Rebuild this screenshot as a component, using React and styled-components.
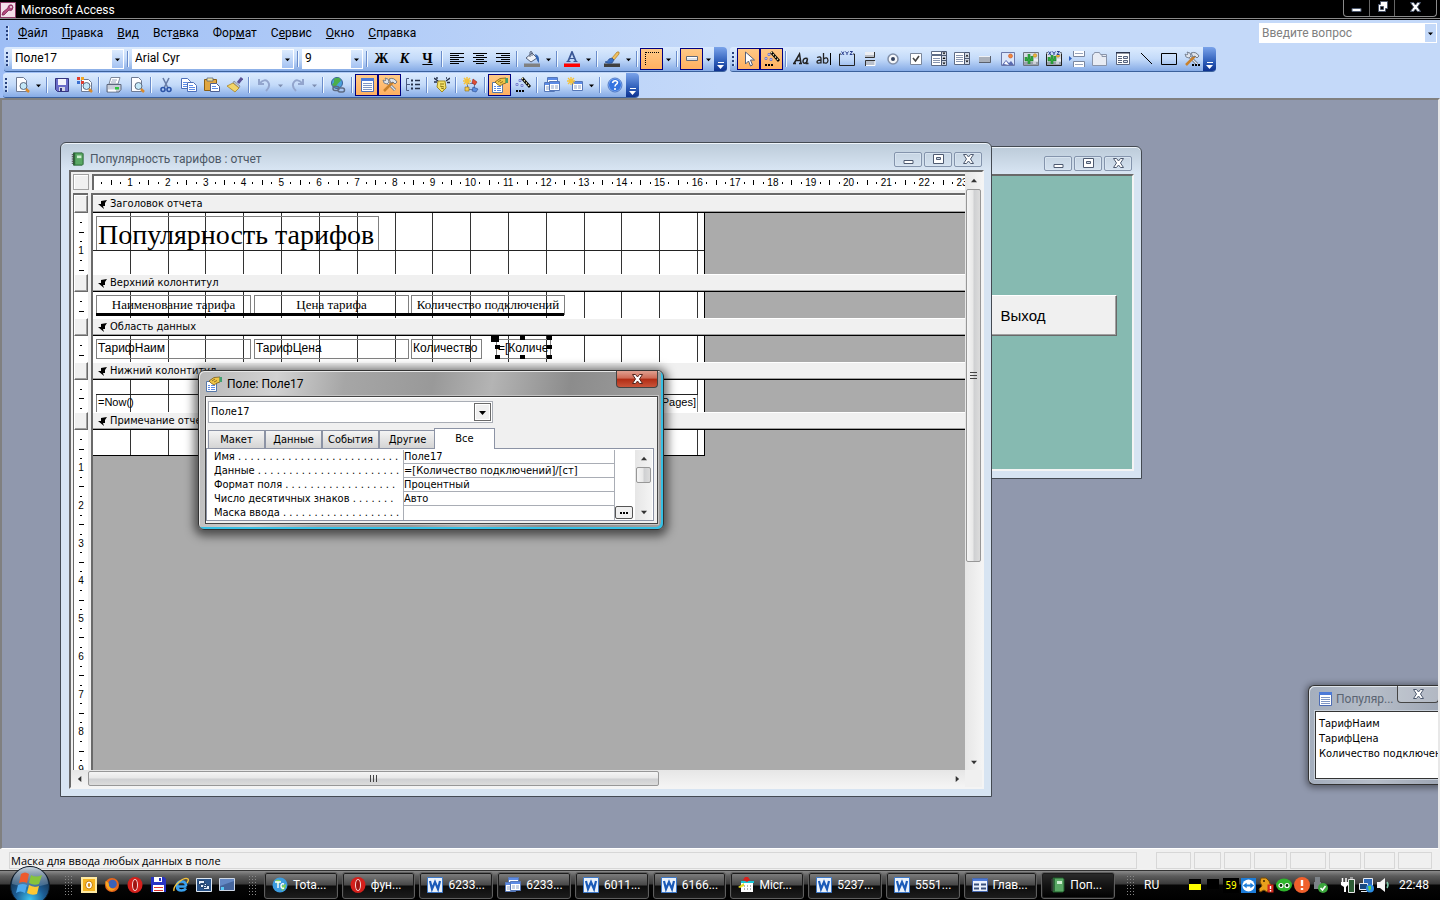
import React, { useState } from "react";
import styled, { createGlobalStyle, css } from "styled-components";

const UI_FONT = 'Roboto, "Open Sans", "Noto Sans", sans-serif';
const TAHOMA = '"DejaVu Sans Condensed", "DejaVu Sans", sans-serif';
const ARIAL = '"Liberation Sans", Arial, sans-serif';
const TIMES = '"Liberation Serif", "Times New Roman", serif';

const UNIT = 37.8; // one centimetre on the rulers

const GlobalStyle = createGlobalStyle`
    * {
        box-sizing: border-box;
    }

    body {
        margin: 0;
        font-family: ${UI_FONT};
        font-size: 12px;
        color: #000;
        overflow: hidden;
    }

    button, input, select {
        font: inherit;
        color: inherit;
        margin: 0;
        padding: 0;
        border: 0;
        border-radius: 0;
        background: none;
        outline: none;
    }

    svg {
        display: block;
        flex: none;
    }
`;

/* ---------- icons ---------- */

const page = <path d="M2.500 .5h7l3 3v11h-10z" fill="#fdfdff" stroke="#6d7a94" />;
const lens = (
    <>
        <circle cx="9.500" cy="9" r="3.500" fill="#c4e8f8" stroke="#5c6b80" />
        <path d="M12 12l3 3" stroke="#d98a2b" strokeWidth="2.500" />
    </>
);
const tools = (
    <>
        <path d="M4 4l9 9" stroke="#6a7484" strokeWidth="2.800" />
        <path d="M4 4l9 9" stroke="#dfe4ec" strokeWidth="1.200" />
        <path d="M1 3l1 3 3 1 2-2-1-3-3-1 1 2-1 1z" fill="#dfe4ec" stroke="#6a7484" strokeWidth=".8" />
        <path d="M2 14l9-9" stroke="#c9812c" strokeWidth="2.500" />
        <path d="M7 2q5-2 8 3l-2 2-2-2-2 1z" fill="#dfe4ec" stroke="#5a6474" strokeWidth=".8" />
    </>
);
const wand = (
    <>
        <path d="M7 1l8 9" stroke="#000" strokeWidth="2.800" />
        <path d="M7 1l8 9" stroke="#efe8b0" strokeWidth="1.200" strokeDasharray="1.500 1.500" />
        <path d="M1 6.500h2v2H1zM4 2.500h2v2H4zM6 7.500h2v2H6z" fill="#dfe4ff" stroke="#6570c8" strokeWidth=".8" />
        <path d="M1 13h2v2H1zM4 13h2v2H4zM7 13h2v2H7z" fill="#000" />
    </>
);
const sheet = (x, y) => (
    <g transform={`translate(${x} ${y})`}>
        <path d="M.5 .5h10v9H.5z" fill="#fff" stroke="#5577b8" />
        <path d="M1 1h9v2H1z" fill="#5c8be6" />
        <path d="M2 5h3M6 5h3M2 7h3M6 7h3" stroke="#8fa3c8" />
    </g>
);
const landscape = (
    <>
        <path d="M1.500 1.500h13v13h-13z" fill="#dbe6fa" stroke="#6b78a8" />
        <path d="M2 14l4-5 3 3 2-2 3 4z" fill="#5a6bb0" />
        <path d="M4 13l2-3 3 4z" fill="#fff" />
        <circle cx="10.500" cy="5" r="2" fill="#f08a3c" stroke="#c8502c" strokeWidth=".6" />
    </>
);
const cactus = (
    <>
        <path d="M.5 1.500h15v13H.5z" fill="#d5dbe4" stroke="#6c7480" />
        <path d="M1 11h14v3H1z" fill="#9aa2ae" />
        <path d="M3 6v3h6V5M6 3v10" stroke="#1b7a26" strokeWidth="2.600" fill="none" />
        <path d="M3 6v3h6V5M6 3v10" stroke="#38b548" strokeWidth="1.200" fill="none" />
        <circle cx="12" cy="4.500" r="1.700" fill="#f2b93c" stroke="#b07818" strokeWidth=".6" />
        <path d="M11 9h4M10 12h3" stroke="#fff" />
    </>
);
const xyz = (
    <path
        d="M2.500 .5l2.500 3.500M5 .5L2.500 4M6.500 .5L8 2.500 9.500 .5M8 2.500V4M11 .5h2.500L11 3.500h2.500"
        stroke="#2a3f8c"
        fill="none"
    />
);
const properties = (
    <>
        <path d="M.5 5.500h10v10H.5z" fill="#fff" stroke="#5577a8" />
        <path d="M2 9.500h2M5 9.500h4M2 11.500h2M5 11.500h4M2 13.500h2M5 13.500h4" stroke="#5c8be6" />
        <path d="M3 5l5-3.500L14 1v5l-3 1-3 2-3-2z" fill="#f0c648" stroke="#7a5a14" strokeWidth=".8" />
        <path d="M6 5l3-2M8 6l3-1.500" stroke="#7a5a14" strokeWidth=".8" />
        <path d="M13.500 1H16v5h-2.500z" fill="#43a070" />
    </>
);

const icons = {
    key: (
        <>
            <path d="M.5 .5h15v15H.5z" fill="#f3dfe9" stroke="#8d3a66" />
            <path d="M8 5q1-3 4-2 2 2 0 5-2 1-3 0l-5 5-2 0 1-3 5-4z" fill="#b3487e" stroke="#7c2452" strokeWidth=".8" />
            <circle cx="11" cy="5" r="1" fill="#f3dfe9" />
        </>
    ),
    alignLeft: <path d="M1 2.500h14M1 4.500h9M1 6.500h14M1 8.500h9M1 10.500h14M1 12.500h9" stroke="#000" />,
    alignCenter: <path d="M1 2.500h14M4 4.500h8M1 6.500h14M4 8.500h8M1 10.500h14M4 12.500h8" stroke="#000" />,
    alignRight: <path d="M1 2.500h14M6 4.500h9M1 6.500h14M6 8.500h9M1 10.500h14M6 12.500h9" stroke="#000" />,
    bucket: (
        <>
            <path d="M0 12.500h16v3.500H0z" fill="#808080" />
            <path d="M2 7l6-5 5 5-6 4z" fill="#eef2f8" stroke="#56627a" />
            <path d="M6 6V1q1-1 2 0v4" stroke="#56627a" fill="none" />
            <path d="M11 3q5 1 4 9-2-2-3-5z" fill="#3567b5" />
        </>
    ),
    fontColor: (
        <>
            <path d="M0 12.500h16v3.500H0z" fill="#f00" />
            <path d="M4 10.500L8 1l4 9.500" stroke="#3a5795" strokeWidth="1.800" fill="none" />
            <path d="M5.500 7.500h5M2.500 10.500h4M9.500 10.500h4" stroke="#3a5795" fill="none" />
        </>
    ),
    pen: (
        <>
            <path d="M0 12.500h16v3.500H0z" fill="#404040" />
            <path d="M8 7l5-6q3-1 2 2l-5 6z" fill="#f0c060" stroke="#a87a28" strokeWidth=".7" />
            <path d="M1 11q3 0 4-3l3-1 2 2-2 3q-4 1-7-1z" fill="#3a6fc4" stroke="#274c8c" strokeWidth=".7" />
        </>
    ),
    border: <path d="M1.500 1v14M2 1.500h13" stroke="#000" strokeDasharray="1 1" fill="none" />,
    effect: (
        <>
            <path d="M2.500 5.500h11v4h-11z" fill="#dfe3ea" stroke="#5f6878" />
            <path d="M3 6.500h10" stroke="#fff" />
        </>
    ),
    pointer: <path d="M4.500 1v12l3-3 2 5 2-1-2-5h4z" fill="#fff" stroke="#56627a" />,
    wand,
    label: (
        <>
            <path d="M1 12.500L6.500 3l1.500 9.500M3 9.500h4.500M0 12.500h3M6 12.500h3" stroke="#222" strokeWidth="1.500" fill="none" />
            <path d="M14.500 7.500q-4-1-4.500 2.500 0 3.500 3.500 1.500l1-4-1 5h2" stroke="#222" strokeWidth="1.500" fill="none" />
        </>
    ),
    textbox: (
        <>
            <path
                d="M1 6.500q4-1.500 4 1v5M5 9q-4 0-4 2t4 .5M7.500 2v10.500M7.500 8q4-3 4.500 1.500-.5 4-4.500 2"
                stroke="#222"
                strokeWidth="1.300"
                fill="none"
            />
            <path d="M14.500 2v12" stroke="#000" />
        </>
    ),
    group: (
        <>
            <path d="M2 3H.5v11.500h15V3H14" stroke="#222" fill="none" />
            {xyz}
        </>
    ),
    toggle: (
        <>
            <path d="M3 1h10v6H3z" fill="#eceef2" />
            <path d="M3 6.500h9.500V1" stroke="#333" fill="none" />
            <path d="M3 5h9" stroke="#8a909c" />
            <path d="M3 9h10v6H3z" fill="#b9c0cc" />
            <path d="M3.500 15V9.500H13" stroke="#333" fill="none" />
            <path d="M4 14.500h9V10" stroke="#fff" fill="none" />
        </>
    ),
    radio: (
        <>
            <circle cx="8" cy="8" r="5" fill="#f5f7fa" stroke="#8290a8" strokeWidth="1.500" />
            <circle cx="8" cy="8" r="2" fill="#33415e" />
        </>
    ),
    check: (
        <>
            <path d="M2.500 2.500h11v11h-11z" fill="#fff" stroke="#7a869a" />
            <path d="M5 7l2.500 3L11 5" stroke="#444" strokeWidth="1.600" fill="none" />
        </>
    ),
    combo: (
        <>
            <path d="M.5 .5h10v3H.5zM.5 4.500h10v10H.5z" fill="#fff" stroke="#5e6c86" />
            <path d="M2 7.500h7M2 9.500h7M2 11.500h7" stroke="#8794ae" />
            <path d="M10.500 .5h5v14h-5z" fill="#d3dae6" stroke="#4a5670" />
            <path d="M11 4.500h4M11 9.500h4" stroke="#4a5670" />
            <path d="M11.500 1.500h3L13 3.500zM11.500 8h3L13 6zM11.500 11.500h3L13 13.500z" fill="#000" />
        </>
    ),
    listbox: (
        <>
            <path d="M.5 1.500h10v12H.5z" fill="#fff" stroke="#5e6c86" />
            <path d="M2 4.500h7M2 6.500h7M2 8.500h7M2 10.500h7" stroke="#8794ae" />
            <path d="M10.500 1.500h5v12h-5z" fill="#d3dae6" stroke="#4a5670" />
            <path d="M11 7.500h4" stroke="#4a5670" />
            <path d="M11.500 5.500h3L13 3.500zM11.500 9.500h3L13 11.500z" fill="#000" />
        </>
    ),
    command: (
        <>
            <path d="M2 5h12v7H2z" fill="#aab0ba" />
            <path d="M2 5h12v1H2z" fill="#eef0f4" />
            <path d="M2 11.500h11.500V5" stroke="#5a606c" fill="none" />
        </>
    ),
    image: landscape,
    unbound: cactus,
    bound: (
        <>
            {cactus}
            <path d="M2 0h12v4H2z" fill="#c8dcfa" />
            {xyz}
            <path d="M.5 3v11.500h15V3" stroke="#222" fill="none" />
        </>
    ),
    pageBreak: (
        <>
            <path d="M4.500 0v5.500h11V0M4.500 16v-5.500h11V16" fill="#fff" stroke="#7a879f" />
            <path d="M6 2.500h8M6 13.500h8" stroke="#9aa6bd" />
            <path d="M0 5v5l3-2.500z" fill="#2f62c0" />
        </>
    ),
    tab: (
        <>
            <path d="M.5 14.500v-11h1l1-2h5l1 2h6v11z" fill="#e8ecf4" stroke="#8a95aa" />
            <path d="M10 3.500v2h5" stroke="#8a95aa" />
        </>
    ),
    subform: (
        <>
            <path d="M1.500 1.500h13v12h-13z" fill="#fff" stroke="#5a6680" />
            <path d="M1 1h14v1.500H1z" fill="#2a344c" />
            <path d="M3 5.500h4M3 7.500h4M3 9.500h4M3 11.500h4" stroke="#56627a" />
            <path d="M8.500 5.500h4v2h-4zM8.500 9.500h4v2h-4z" stroke="#56627a" fill="#dfe6f4" />
        </>
    ),
    line: <path d="M3 2l11 11" stroke="#000" />,
    rect: <path d="M.5 2.500h15v11H.5z" stroke="#000" fill="none" />,
    more: (
        <>
            {tools}
            <path d="M8 13h2v2H8zM11 13h2v2h-2zM14 13h2v2h-2z" fill="#000" />
        </>
    ),
    preview: (
        <>
            {page}
            {lens}
        </>
    ),
    save: (
        <>
            <path d="M1.500 1.500h13v13h-11l-2-2z" fill="#6a6cc8" stroke="#34357e" />
            <path d="M4 2h8v6H4z" fill="#f4f4fc" />
            <path d="M5 10h6v4H5z" fill="#d4d6e6" />
            <path d="M6 11h2v3H6z" fill="#34357e" />
        </>
    ),
    search: (
        <>
            <path d="M4.500 2.500h7l3 3v9h-10z" fill="#fff" stroke="#6d7a94" />
            <path d="M0 0h3v3H0z" fill="#e23c2c" />
            <path d="M4 0h3v3H4z" fill="#f2a722" />
            <path d="M0 4h3v3H0z" fill="#3a6fd0" />
            <path d="M4 4h3v3H4z" fill="#e23c2c" />
            {lens}
        </>
    ),
    print: (
        <>
            <path d="M5 .5h9L12 7H3z" fill="#fff" stroke="#7d879a" />
            <path d="M6 3h5M5 5h5" stroke="#9aa6bd" />
            <path d="M1 7.500h14v5l-2 2.500H1z" fill="#c8cdd8" stroke="#5d677c" />
            <path d="M2 12.500h8v2H2z" fill="#fff" />
            <path d="M9 10h4v2.500H9z" fill="#2ec43e" />
        </>
    ),
    cut: (
        <>
            <path d="M5 1l5 10M11 1L6 11" stroke="#6a7fa8" strokeWidth="1.600" />
            <circle cx="5" cy="12.500" r="2" fill="none" stroke="#2d55a8" strokeWidth="1.600" />
            <circle cx="11" cy="12.500" r="2" fill="none" stroke="#2d55a8" strokeWidth="1.600" />
        </>
    ),
    copy: (
        <>
            <path d="M.5 1.500h6l3 3v7h-9z" fill="#fff" stroke="#4d6fb8" />
            <path d="M2 5.500h4M2 7.500h4M2 9.500h4" stroke="#5c8be6" />
            <path d="M6.500 5.500h6l3 3v6h-9z" fill="#fff" stroke="#4d6fb8" />
            <path d="M8 8.500h4M8 10.500h6M8 12.500h6" stroke="#5c8be6" />
        </>
    ),
    paste: (
        <>
            <path d="M.5 2.500h12v11H.5z" fill="#e0a640" stroke="#8c6014" />
            <path d="M3 1h6v3H3z" fill="#f4e6a0" stroke="#5d677c" strokeWidth=".8" />
            <path d="M6.500 6.500h6l3 3v5h-9z" fill="#fff" stroke="#4d5f90" />
            <path d="M8 9.500h4M8 11.500h6" stroke="#5c8be6" />
        </>
    ),
    brush: (
        <>
            <path d="M15 1l-4 5" stroke="#5a5296" strokeWidth="3" />
            <path d="M7 4l6 5-1 2-6-5z" fill="#bcc3d0" stroke="#6a7080" strokeWidth=".6" />
            <path d="M6 6l6 5-4 4-8-6z" fill="#f2d468" stroke="#a88428" strokeWidth=".8" />
        </>
    ),
    undo: <path d="M3 2v5h5M3.500 6.500Q9 1 12 5t-2 9" stroke="#93a5cd" strokeWidth="2" fill="none" />,
    redo: <path d="M13 2v5H8M12.500 6.500Q7 1 4 5t2 9" stroke="#93a5cd" strokeWidth="2" fill="none" />,
    globe: (
        <>
            <circle cx="7" cy="6" r="5.500" fill="#4aa0dc" stroke="#3b5f94" />
            <path d="M4 1.500l5-1 2 3-3 3-3 4-3-3 2-2z" fill="#4cae4c" />
            <path
                d="M3 11.500q0-2 2-2h2q2 0 2 2t-2 2H5q-2 0-2-2zM8 13q0-2 2-2h2.500q2 0 2 2t-2 2H10q-2 0-2-2z"
                fill="none"
                stroke="#5d6b84"
                strokeWidth="1.500"
            />
        </>
    ),
    fieldList: (
        <>
            <path d="M2.500 1.500h12v13h-12z" fill="#fff" stroke="#4c6cb4" />
            <path d="M2 1h13v3H2z" fill="#4c7ad8" />
            <path d="M4 6.500h9M4 8.500h9M4 10.500h9M4 12.500h9" stroke="#7f96c4" />
        </>
    ),
    tools,
    sorting: (
        <>
            <path d="M4 1.500H1.500v12H4M2 7.500h3" stroke="#4a5a80" fill="none" />
            <path d="M6 3.500h2M6 7.500h2M6 11.500h2" stroke="#26314a" strokeWidth="2" />
            <path d="M10 3.500h5M10 7.500h5M10 11.500h5" stroke="#26314a" strokeWidth="1.500" />
        </>
    ),
    format: (
        <>
            <path d="M4 4l7 0 1 7-4 4-5-5z" fill="#f4e26a" stroke="#a08a20" />
            <path d="M6 7l4 0M6 9l4 1M7 11l3 1" stroke="#8a7410" />
            <path d="M0 1l4 3M0 5h3M12 4l4-3M13 5.500h3M12 1h1M3 0v2" stroke="#26314a" strokeWidth="1.400" />
        </>
    ),
    build: (
        <>
            <path d="M4.500 6.500h7v6h-7z" fill="none" stroke="#6279a8" />
            <path d="M4 0v8M0 4h8M1 1l6 6M7 1L1 7" stroke="#f5c23c" strokeWidth="1.500" />
            <path d="M10 2l4 3-2 3-3-2z" fill="#e24b34" stroke="#8c2c1c" strokeWidth=".6" />
            <path d="M2 10h4v4H2z" fill="#f2c850" stroke="#8c6c18" strokeWidth=".6" />
            <path d="M10 10l5 2-2 3-4-1z" fill="#5a8ce0" stroke="#2c4c8c" strokeWidth=".6" />
        </>
    ),
    properties,
    windows: (
        <>
            {sheet(3, 0)}
            {sheet(0, 5)}
            {sheet(5, 4)}
        </>
    ),
    newObject: (
        <>
            {sheet(5, 4)}
            <path d="M4 0v8M0 4h8M1 1l6 6M7 1L1 7" stroke="#f5c23c" strokeWidth="1.300" />
        </>
    ),
    help: (
        <>
            <circle cx="8" cy="8" r="6.500" fill="#3574e0" stroke="#9cc0f6" />
            <circle cx="8" cy="8" r="7" fill="none" stroke="#2c5ab4" strokeWidth=".7" />
            <path d="M5.500 6q.5-2.500 3-2.300 3 .8 1.500 3Q8 8 8 9.500M8 11v2" stroke="#fff" strokeWidth="1.600" fill="none" />
        </>
    ),
    report: (
        <>
            <path d="M4 1h10l1 1v12l-1 1H4z" fill="#5aa865" stroke="#1f5c2a" />
            <path d="M4 1h2v14H4z" fill="#2a6d36" />
            <path d="M8 4h5v3H8z" fill="#cdeed0" />
            <path d="M2 3h3M2 5h3M2 7h3M2 9h3M2 11h3M2 13h3" stroke="#444" />
        </>
    ),
    outlook: (
        <>
            <path d="M1 1h14v14H1z" fill="#f6b420" stroke="#fde9a4" strokeWidth="2" />
            <ellipse cx="8" cy="8" rx="3.500" ry="4" fill="#fff" stroke="#c47e08" />
            <ellipse cx="8" cy="8" rx="1.300" ry="2" fill="#d68d10" />
        </>
    ),
    firefox: (
        <>
            <circle cx="8" cy="8" r="7" fill="#e8661a" />
            <circle cx="8.500" cy="7" r="4.300" fill="#3a62b8" />
            <path d="M1.500 4q4 1 3.500 5 2 4 7 2-3 4-7 2-4-4-3.500-9z" fill="#f5a623" />
        </>
    ),
    opera: (
        <>
            <ellipse cx="8" cy="8" rx="7.500" ry="8" fill="#d4201c" />
            <ellipse cx="8" cy="8" rx="3" ry="6" fill="#f6dcdc" />
            <ellipse cx="8" cy="8" rx="2" ry="5" fill="#a01412" />
        </>
    ),
    floppy: (
        <>
            <path d="M1 0h13l2 2v13H1z" fill="#2733c4" />
            <path d="M4 0h8v5H4zM3 8h11v7H3z" fill="#fff" />
            <path d="M9 1h2v3H9z" fill="#2733c4" />
            <path d="M4 10.500h9M4 13.500h9" stroke="#e0322c" />
        </>
    ),
    ie: (
        <>
            <path
                d="M13.500 9.500H4M13 9q0-4.500-4.500-4.500T4 9q0 4.500 4.500 4.500 3 0 4.500-2"
                stroke="#3aa2ee"
                strokeWidth="2.700"
                fill="none"
            />
            <path d="M1 14Q0 10 6 5t9-3q1 1-1 4" stroke="#f5c43c" strokeWidth="1.400" fill="none" />
        </>
    ),
    switcher: (
        <>
            <path d="M.5 1.500h15v13H.5z" fill="#2a558c" stroke="#dfe8f2" />
            <path d="M2.500 3.500h6v4h-6zM4.500 6.500h6v4h-6zM7.500 8.500h6v4h-6z" fill="#e6eef8" stroke="#244672" />
        </>
    ),
    desktop: (
        <>
            <path d="M.5 1.500h15v12H.5z" fill="#6488c4" stroke="#cdd6e4" />
            <path d="M1 9l14-5v9H1z" fill="#45659c" />
            <path d="M2 10h3v3H2z" fill="#56c8f4" />
        </>
    ),
    totalcmd: (
        <>
            <circle cx="8" cy="8" r="7.500" fill="#3c9ce0" />
            <path d="M3 4q3-3 6 0l-3 4zM9 9l5-2q0 5-4 7z" fill="#7ed05c" />
            <path d="M3 5h6M6 5v6M12 7q-3-1-3 2t3 2" stroke="#fff" strokeWidth="1.400" fill="none" />
        </>
    ),
    word: (
        <>
            <path d="M.5 .5h15v15H.5z" fill="#eaf2fc" stroke="#3c78c8" />
            <path d="M3 4l2 8L8 5l3 7 2-8" stroke="#1a5ab8" strokeWidth="2.200" fill="none" />
        </>
    ),
    msaccess: (
        <>
            <path d="M3 5h12v10H3z" fill="#fff" />
            <path d="M3 4h13v2H3z" fill="#18c8d8" />
            <path d="M5 3l2-3h3l2 3-3 2z" fill="#d8201c" />
            <path d="M0 10l6-4v3l-4 2z" fill="#e8e020" />
            <path d="M6 9h1M9 9h1M12 9h1M6 12h1M9 12h1M12 12h1" stroke="#666" />
        </>
    ),
    form: (
        <>
            <path d="M.5 1.500h15v13H.5z" fill="#e9f0fc" stroke="#4668b0" />
            <path d="M1 2h14v2H1z" fill="#4c7ad8" />
            <path d="M2 7.500h5M9 7.500h5M2 11.500h5M9 11.500h5" stroke="#39507c" strokeWidth="2" />
        </>
    ),
    cpuLoad: (
        <>
            <path d="M2 2h12v6H2z" fill="#000" />
            <path d="M2 7h12v6H2z" fill="#ff0" />
        </>
    ),
    diskLoad: <path d="M2 2h12v10H2z" fill="#000" />,
    teamviewer: (
        <>
            <path d="M0 0h16v16H0z" fill="#1c7cd8" />
            <circle cx="8" cy="8" r="6.500" fill="#fff" />
            <path d="M2 8l4-3v2h4V5l4 3-4 3V9H6v2z" fill="#1c7cd8" />
        </>
    ),
    keys: (
        <>
            <path d="M3 1h5l3 3 2 5-4 6-3-2-4 2-1-3 3-3-2-4z" fill="#e8a01c" stroke="#7a4c04" />
            <circle cx="6" cy="4" r="1" fill="#3c2400" />
            <path d="M9.500 7.500h6v8h-6z" fill="#d4281c" />
            <path d="M12.500 9v3M12.500 13v1.500" stroke="#fff" strokeWidth="1.400" />
        </>
    ),
    frog: (
        <>
            <ellipse cx="8" cy="8" rx="8" ry="6.500" fill="#2fb52c" />
            <circle cx="5" cy="8.500" r="2" fill="#062d05" stroke="#fff" strokeWidth="1.200" />
            <circle cx="11" cy="8.500" r="2" fill="#062d05" stroke="#fff" strokeWidth="1.200" />
        </>
    ),
    alert: (
        <>
            <circle cx="8" cy="8" r="8" fill="#f0602c" />
            <path d="M8 3v6M8 11v2" stroke="#fff" strokeWidth="2.400" />
        </>
    ),
    usb: (
        <>
            <path d="M3 0h5v5H3zM2 5h7v7H2z" fill="#7c8288" />
            <circle cx="11" cy="11" r="5" fill="#3ba53c" />
            <path d="M8.500 11l2 2 3-4" stroke="#fff" strokeWidth="1.600" fill="none" />
        </>
    ),
    power: (
        <>
            <path d="M8.500 2.500h6v13h-6zM10 1h3" fill="#2c5c34" stroke="#e8e8e8" />
            <path d="M1 5h7v3l-2 2v5H4v-5L1 8z" fill="#fff" />
            <path d="M2.500 1v4M6 1v4" stroke="#fff" strokeWidth="1.500" />
        </>
    ),
    network: (
        <>
            <path d="M5.500 1.500h9v8h-9z" fill="#2c68b8" stroke="#e6ecf4" />
            <path d="M1.500 6.500h8v6h-8zM3 14.500h6" fill="#184880" stroke="#e6ecf4" />
            <circle cx="12" cy="11.500" r="4" fill="#2c8ce4" />
            <path d="M10 9h3v3l-2 2z" fill="#5cd050" />
        </>
    ),
    volume: (
        <>
            <path d="M1 5h3l5-4v14l-5-4H1z" fill="#f4f4f4" />
            <path d="M11 5q2 3 0 6" stroke="#7cc8a8" strokeWidth="1.500" fill="none" />
        </>
    ),
};

const Icon = ({ name, size = 16 }) => (
    <svg width={size} height={size} viewBox="0 0 16 16" fill="none" aria-hidden="true">
        {icons[name]}
    </svg>
);

const arrows = {
    down: "M0 2h7L3.500 6z",
    up: "M0 5h7L3.500 1z",
    left: "M5 0v7L1 3.500z",
    right: "M2 0v7l4-3.500z",
};

const Arrow = ({ dir = "down", color = "#000", size = 5 }) => (
    <svg width={size} height={size} viewBox="0 0 7 7" aria-hidden="true">
        <path d={arrows[dir]} fill={color} />
    </svg>
);

const glyphs = {
    min: <path d="M3 7.500h9v3H3z" />,
    max: <path d="M2.500 1.500h10v9h-10zM5.500 4.500h4v2h-4z" fillRule="evenodd" />,
    restore: <path d="M5.500 .5h7v7h-2v3h-7v-7h2zM5.500 5.500h3v3h-3z" fillRule="evenodd" />,
    close: <path d="M2.500 1.500h3l2 2.500 2-2.500h3L9.500 6l3 4.500h-3l-2-2.500-2 2.500h-3l3-4.500z" />,
};

const Glyph = ({ kind, stroke = "#4e5a70" }) => (
    <svg width="15" height="12" viewBox="0 0 15 12" fill="#fff" stroke={stroke} aria-hidden="true">
        {glyphs[kind]}
    </svg>
);

/* ---------- application frame ---------- */

const Shell = styled.div`
    height: 100vh;
    display: flex;
    flex-direction: column;
    overflow: hidden;
`;

const TitleBar = styled.header`
    flex: none;
    height: 20px;
    display: flex;
    align-items: flex-start;
    justify-content: space-between;
    background: #000;
    border-bottom: 1px solid #000;
    box-shadow: inset 0 -1px #8a8a8a;
    color: #fff;
`;

const AppTitle = styled.div`
    display: flex;
    align-items: center;
    gap: 5px;
    height: 18px;
    padding-top: 1px;
`;

const FrameButtons = styled.div`
    display: flex;
    height: 17px;
    margin-right: 3px;
    border: 1px solid #8a8a8a;
    border-top: 0;
    border-radius: 0 0 4px 4px;
`;

const FrameButton = styled.button`
    width: ${({ $wide }) => ($wide ? 42 : 25)}px;
    display: flex;
    justify-content: center;
    padding-top: 1px;
    border-left: ${({ $first }) => ($first ? 0 : "1px solid #666")};
`;

const CommandArea = styled.div`
    flex: none;
    display: flex;
    flex-direction: column;
    gap: 1px;
    background: linear-gradient(90deg, #9ebef5, #c4d9f9 50%);
`;

const MenuRow = styled.nav`
    height: 26px;
    display: flex;
    align-items: center;
    padding: 0 3px 0 4px;
`;

const MenuItem = styled.button`
    padding: 0 7px;
    line-height: 20px;
`;

const Spacer = styled.div`
    flex: 1;
`;

const Grip = styled.span`
    flex: none;
    align-self: center;
    width: 3px;
    height: 14px;
    margin: 0 2px;
    background: repeating-linear-gradient(#27417c 0 2px, transparent 2px 4px);
    border-right: 1px solid #d8e6fb;
`;

const Question = styled.div`
    display: flex;
    align-items: center;
    width: 178px;
    height: 20px;
    padding: 1px;
    background: #fff;
    color: #808080;

    input {
        flex: 1;
        min-width: 0;
        padding-left: 2px;
    }

    input::placeholder {
        color: #808080;
        opacity: 1;
    }

    button {
        width: 11px;
        height: 18px;
        display: grid;
        place-items: center;
        background: #c4d9f9;
    }
`;

const ToolbarRow = styled.div`
    display: flex;
    gap: 3px;
    padding-left: ${({ $indent }) => $indent}px;
`;

const Toolbar = styled.div`
    display: flex;
    align-items: center;
    height: 25px;
    border-radius: 3px 4px 4px 3px;
    overflow: hidden;
    background: linear-gradient(#dcebfe, #c3daf9 50%, #86abe6);
    border-bottom: 1px solid #3b619c;
`;

const Separator = styled.span`
    width: 2px;
    height: 16px;
    margin: 0 2px;
    background: #6a8ccb;
    border-right: 1px solid #f1f9ff;
`;

const ToolButton = styled.button`
    width: 23px;
    height: 22px;
    display: grid;
    place-items: center;
    ${({ $on }) =>
        $on &&
        css`
            background: linear-gradient(#ffc986, #ffb060);
            border: 1px solid #000080;
        `}
`;

const DropButton = styled.button`
    width: 11px;
    height: 22px;
    display: grid;
    place-items: center;
`;

const Letter = styled.span`
    font: bold 14px/16px ${TIMES};
    font-style: ${({ $italic }) => ($italic ? "italic" : "normal")};
    text-decoration: ${({ $underline }) => ($underline ? "underline" : "none")};
`;

const ToolbarEnd = styled.button`
    width: 13px;
    height: 25px;
    display: flex;
    justify-content: center;
    align-items: flex-end;
    padding-bottom: 3px;
    background: linear-gradient(#7aa3ea, #2c5cb8 60%, #0a2e8c);
`;

const Combo = styled.label`
    position: relative;
    display: flex;
    width: ${({ $width }) => $width}px;
    height: 20px;
    margin: 0 1px;
    background: #fff;

    select {
        appearance: none;
        flex: 1;
        width: 100%;
        padding: 0 14px 2px 3px;
    }

    span {
        position: absolute;
        top: 1px;
        right: 1px;
        bottom: 1px;
        width: 11px;
        display: grid;
        place-items: center;
        background: linear-gradient(#dcebfe, #a4c2f2);
        pointer-events: none;
    }
`;

const ComboBox = ({ label, value, width }) => (
    <Combo $width={width}>
        <select aria-label={label} defaultValue={value}>
            <option>{value}</option>
        </select>
        <span>
            <Arrow />
        </span>
    </Combo>
);

/* ---------- child windows ---------- */

const Workspace = styled.main`
    position: relative;
    flex: 1;
    min-height: 0;
    overflow: hidden;
    background: #9098ad;
    border: 2px solid;
    border-color: #808080 #e8e8e8 #fff #808080;
    border-bottom-width: 1px;
`;

const ChildWindow = styled.section`
    position: absolute;
    left: ${({ $x }) => $x}px;
    top: ${({ $y }) => $y}px;
    width: ${({ $w }) => $w}px;
    height: ${({ $h }) => $h}px;
    display: flex;
    flex-direction: column;
    padding: 0 7px 7px 8px;
    background: linear-gradient(#bccbd9, #d7e4f2 26px);
    border: 1px solid #444a52;
    border-radius: 6px 6px 0 0;
    box-shadow: inset 0 1px #eef4fa;
`;

const ChildTitle = styled.div`
    flex: none;
    height: 27px;
    display: flex;
    align-items: center;
    gap: 6px;
    padding: 5px 2px 0 1px;
    color: #4c5866;
`;

const ChildButton = styled.button`
    width: 28px;
    height: 15px;
    display: grid;
    place-items: center;
    border: 1px solid #8494ac;
    border-radius: 2px;
    box-shadow: inset 0 0 0 1px #d8e4f0;
`;

const ButtonSet = styled.div`
    display: flex;
    gap: 2px;
`;

const Caption = styled.h1`
    flex: 1;
    min-width: 0;
    margin: 0;
    font-size: 12px;
    font-weight: normal;
    line-height: 16px;
    white-space: nowrap;
`;

const WindowButtons = () => (
    <ButtonSet>
        {["min", "max", "close"].map((kind) => (
            <ChildButton key={kind} aria-label={kind}>
                <Glyph kind={kind} />
            </ChildButton>
        ))}
    </ButtonSet>
);

const Client = styled.div`
    flex: 1;
    min-height: 0;
    border: 2px solid;
    border-color: #696969 #f4f4f4 #f4f4f4 #696969;
    background: ${({ $color }) => $color || "#f0f0f0"};
`;

const FormClient = styled(Client)`
    display: flex;
    justify-content: flex-end;
    align-items: flex-start;
    padding: 119px 15px 0;
`;

const ExitButton = styled.button`
    width: 188px;
    height: 41px;
    font: 15px ${ARIAL};
    background: #f0f0f0;
    border: 1px solid;
    border-color: #fff #696969 #696969 #fff;
    box-shadow: inset -1px -1px #a0a0a0;
`;

/* ---------- scroll bars ---------- */

const Track = styled.div`
    display: flex;
    flex-direction: ${({ $vertical }) => ($vertical ? "column" : "row")};
    background: ${({ $vertical }) =>
        $vertical ? "linear-gradient(90deg, #e6e6e6, #f4f4f4)" : "linear-gradient(#e6e6e6, #f4f4f4)"};
`;

const TrackButton = styled.button`
    flex: none;
    width: 17px;
    height: 17px;
    display: grid;
    place-items: center;
`;

const Thumb = styled.div`
    flex: none;
    ${({ $vertical, $size }) => ($vertical ? `height: ${$size}px;` : `width: ${$size}px;`)}
    display: grid;
    place-items: center;
    margin: ${({ $vertical }) => ($vertical ? "0 1px" : "1px 0")};
    border: 1px solid #979797;
    border-radius: 2px;
    background: ${({ $vertical }) =>
        $vertical
            ? "linear-gradient(90deg, #f5f5f5, #e8e8e8 45%, #cfd0d2 55%, #dcdcdc)"
            : "linear-gradient(#f5f5f5, #e8e8e8 45%, #cfd0d2 55%, #dcdcdc)"};
`;

const ScrollBar = ({ vertical, size, grip = true }) => (
    <Track $vertical={vertical}>
        <TrackButton aria-label="scroll back">
            <Arrow dir={vertical ? "up" : "left"} color="#333" size={6} />
        </TrackButton>
        <Thumb $vertical={vertical} $size={size}>
            {grip && (
                <svg width="8" height="8" viewBox="0 0 8 8" stroke="#444">
                    <path d={vertical ? "M0 .5h7M0 3.500h7M0 6.500h7" : "M.5 0v7M3.500 0v7M6.500 0v7"} />
                </svg>
            )}
        </Thumb>
        <Spacer />
        <TrackButton aria-label="scroll forward">
            <Arrow dir={vertical ? "down" : "right"} color="#333" size={6} />
        </TrackButton>
    </Track>
);

/* ---------- report designer ---------- */

const Designer = styled(Client)`
    display: grid;
    grid-template-columns: 1fr 17px;
    grid-template-rows: 1fr 17px;
`;

const Canvas = styled.div`
    min-width: 0;
    min-height: 0;
    overflow: hidden;
    display: flex;
    flex-direction: column;
    padding: 2px 0 0 2px;
`;

const RulerRow = styled.div`
    flex: none;
    display: flex;
    gap: 3px;
    height: 19px;
`;

const Corner = styled.button`
    width: 16px;
    height: 16px;
    border: 1px solid #a0a0a0;
    box-shadow: inset 1px 1px #fff;
`;

const sunken = css`
    border: 0 solid #696969;
    border-top-width: 2px;
    border-left-width: 2px;
`;

const HorizontalRuler = styled.div`
    ${sunken}
    flex: 1;
    height: 16px;
    overflow: hidden;
    background: #fff;
    padding-left: 3px;
`;

const Scale = styled.div`
    display: flex;
    flex-direction: ${({ $vertical }) => ($vertical ? "column" : "row")};
    ${({ $vertical, $length }) =>
        $vertical ? `height: ${$length}px; width: 14px;` : `width: ${$length}px; height: 13px;`}
`;

const Step = styled.span`
    flex: 1 1 0;
    min-width: 0;
    min-height: 0;
    display: flex;
    align-items: center;
    justify-content: center;
    white-space: nowrap;
    font: 10px/10px ${ARIAL};
`;

const Tick = styled.i`
    flex: none;
    background: #000;
    ${({ $vertical, $long }) =>
        $vertical ? `width: ${$long ? 5 : 2}px; height: 1px;` : `width: 1px; height: ${$long ? 5 : 2}px;`}
`;

// four steps to a centimetre: dot, bar, dot, number
const RulerScale = ({ steps, vertical }) => (
    <Scale $vertical={vertical} $length={Math.round((steps * UNIT) / 4)}>
        {Array.from({ length: steps }, (_, i) => (
            <Step key={i}>{i % 4 === 3 ? (i + 1) / 4 : <Tick $vertical={vertical} $long={i % 4 === 1} />}</Step>
        ))}
    </Scale>
);

const DesignArea = styled.div`
    flex: 1;
    min-height: 0;
    display: grid;
    grid-template-columns: 15px 1fr;
    column-gap: 3px;
`;

const RulerColumn = styled.div`
    min-height: 0;
    display: flex;
    flex-direction: column;
    overflow: hidden;
    border-top: 2px solid #696969;
    border-left: 1px solid #696969;
    background: #fff;
`;

const SectionHandle = styled.button`
    flex: none;
    height: 18px;
    background: #f0f0f0;
    border: 1px solid;
    border-color: #fff #696969 #696969 #fff;
    box-shadow: inset -1px -1px #a0a0a0;
`;

const RulerSlice = styled.div`
    flex: ${({ $h }) => ($h ? `0 0 ${$h}px` : "1")};
    min-height: 0;
    overflow: hidden;
    padding-top: 5px;
`;

const Sections = styled.div`
    ${sunken}
    min-width: 0;
    overflow: hidden;
    background: #ababab;
`;

const SectionHeader = styled.h2`
    height: 18px;
    margin: 0;
    padding-left: 5px;
    display: flex;
    align-items: center;
    gap: 3px;
    font: 11px/14px ${TAHOMA};
    background: #f0f0f0;
    border-top: 1px solid #fff;
    border-bottom: 1px solid #000;
    box-shadow: inset 0 -1px #a0a0a0;
`;

const Paper = styled.div`
    position: relative;
    width: 612px;
    height: ${({ $h }) => $h}px;
    background: #fff;
    border-right: 1px solid #000;
    border-bottom: ${({ $last }) => ($last ? "1px solid #000" : 0)};
    overflow: hidden;
`;

const GridLines = styled.div`
    width: 605px;
    height: 100%;
    display: flex;

    i {
        flex: 1 1 0;
        border-right: 1px solid #333;
    }
`;

const Rule = styled.div`
    position: absolute;
    left: ${({ $x }) => $x}px;
    top: ${({ $y }) => $y}px;
    width: ${({ $w }) => $w}px;
    height: ${({ $thick }) => $thick || 1}px;
    background: ${({ $thick }) => ($thick ? "#000" : "#222")};
`;

const Control = styled.div`
    position: absolute;
    left: ${({ $x }) => $x}px;
    top: ${({ $y }) => $y}px;
    width: ${({ $w }) => $w}px;
    height: ${({ $h }) => $h}px;
    padding: 0 1px;
    overflow: hidden;
    white-space: nowrap;
    border: 1px solid #808080;
    text-align: ${({ $align }) => $align || "left"};
    font: ${({ $font }) => $font};
`;

const Handle = styled.i`
    position: absolute;
    left: ${({ $x }) => $x}px;
    top: ${({ $y }) => $y}px;
    width: ${({ $big }) => ($big ? 8 : 5)}px;
    height: ${({ $big }) => ($big ? 6 : 4)}px;
    background: #000;
`;

const HEAD = `13px/17px ${TIMES}`;
const FIELD = `12px/16px ${ARIAL}`;
const SMALL = `11px/15px ${ARIAL}`;

const sections = [
    {
        title: "Заголовок отчета",
        height: 61,
        steps: 6,
        rules: [{ x: 0, y: 37, w: 611 }],
        controls: [{ text: "Популярность тарифов", x: 3, y: 3, w: 283, h: 35, font: `28px/35px ${TIMES}` }],
    },
    {
        title: "Верхний колонтитул",
        height: 26,
        steps: 2,
        rules: [{ x: 3, y: 21, w: 468, thick: 3 }],
        controls: [
            { text: "Наименование тарифа", x: 3, y: 3, w: 155, h: 20, font: HEAD, align: "center" },
            { text: "Цена тарифа", x: 161, y: 3, w: 155, h: 20, font: HEAD, align: "center" },
            { text: "Количество подключений", x: 318, y: 3, w: 154, h: 20, font: HEAD, align: "center" },
        ],
    },
    {
        title: "Область данных",
        height: 26,
        steps: 2,
        controls: [
            { text: "ТарифНаим", x: 3, y: 3, w: 155, h: 20, font: FIELD },
            { text: "ТарифЦена", x: 161, y: 3, w: 155, h: 20, font: FIELD },
            { text: "Количество", x: 318, y: 3, w: 71, h: 20, font: FIELD },
            { text: "=[Количе", x: 403, y: 3, w: 55, h: 20, font: FIELD },
        ],
        handles: [
            [398, 0, true],
            [427, 0],
            [454, 0],
            [402, 9],
            [454, 9],
            [402, 19],
            [427, 19],
            [454, 19],
        ],
    },
    {
        title: "Нижний колонтитул",
        height: 32,
        steps: 3,
        rules: [{ x: 3, y: 14, w: 602 }],
        controls: [
            { text: "=Now()", x: 3, y: 14, w: 250, h: 20, font: SMALL },
            { text: '="Страница " & [Page] & " из " & [Pages]', x: 300, y: 14, w: 305, h: 20, font: SMALL, align: "right" },
        ],
    },
    { title: "Примечание отчета", height: 26, steps: 36, last: true },
];

const SectionMark = () => (
    <svg width="9" height="9" viewBox="0 0 9 9" aria-hidden="true">
        <path d="M3 1l6-1-2 3v3H5l1 3-6-5h3z" fill="#000" />
    </svg>
);

const ReportSection = ({ section }) => (
    <>
        <SectionHeader>
            <SectionMark />
            {section.title}
        </SectionHeader>
        <Paper $h={section.height} $last={section.last}>
            <GridLines>
                {Array.from({ length: 16 }, (_, i) => (
                    <i key={i} />
                ))}
            </GridLines>
            {(section.controls || []).map((c) => (
                <Control key={c.text} $x={c.x} $y={c.y} $w={c.w} $h={c.h} $font={c.font} $align={c.align}>
                    {c.text}
                </Control>
            ))}
            {(section.rules || []).map((rule) => (
                <Rule key={rule.y} $x={rule.x} $y={rule.y} $w={rule.w} $thick={rule.thick} />
            ))}
            {(section.handles || []).map(([x, y, big]) => (
                <Handle key={`${x}-${y}`} $x={x} $y={y} $big={big} />
            ))}
        </Paper>
    </>
);

const ReportWindow = () => (
    <ChildWindow $x={58} $y={42} $w={932} $h={655}>
        <ChildTitle>
            <Icon name="report" size={14} />
            <Caption>Популярность тарифов : отчет</Caption>
            <WindowButtons />
        </ChildTitle>
        <Designer>
            <Canvas>
                <RulerRow>
                    <Corner aria-label="select report" />
                    <HorizontalRuler>
                        <RulerScale steps={92} />
                    </HorizontalRuler>
                </RulerRow>
                <DesignArea>
                    <RulerColumn>
                        {sections.map((s) => (
                            <React.Fragment key={s.title}>
                                <SectionHandle aria-label={s.title} />
                                <RulerSlice $h={s.last ? 0 : s.height}>
                                    <RulerScale vertical steps={s.steps} />
                                </RulerSlice>
                            </React.Fragment>
                        ))}
                    </RulerColumn>
                    <Sections>
                        {sections.map((s) => (
                            <ReportSection key={s.title} section={s} />
                        ))}
                    </Sections>
                </DesignArea>
            </Canvas>
            <ScrollBar vertical size={373} />
            <ScrollBar size={571} />
        </Designer>
    </ChildWindow>
);

/* ---------- floating panels ---------- */

const Panel = styled.aside`
    position: absolute;
    left: ${({ $x }) => $x}px;
    top: ${({ $y }) => $y}px;
    width: ${({ $w }) => $w}px;
    height: ${({ $h }) => $h}px;
    display: flex;
    flex-direction: column;
    padding: 0 5px 5px 6px;
    border: 1px solid #333;
    border-radius: 6px;
    font: 11px/14px ${TAHOMA};
`;

const PropertyPanel = styled(Panel)`
    background: linear-gradient(100deg, #b8b8b8, #d2d2d2 16%, #a6a6a6 30%, #999 48%, #b4b4b4 60%, #8c8c8c 76%, #a2a2a2);
    box-shadow: inset 1px 1px #e6e6e6, inset -2px -2px #35bfe4, 0 2px 10px 4px rgba(0, 0, 0, 0.55);
`;

const FieldPanel = styled(Panel)`
    padding-right: 1px;
    background: linear-gradient(90deg, #a4aebd, #b6bdc8 50%, #9ea6b4);
    border-right: 0;
    border-radius: 6px 0 0 6px;
    box-shadow: inset 1px 1px #dfe4ea, 0 1px 6px 2px rgba(0, 0, 0, 0.4);
`;

const PanelTitle = styled.div`
    flex: none;
    height: 25px;
    display: flex;
    align-items: center;
    gap: ${({ $dim }) => ($dim ? 3 : 5)}px;
    padding-left: ${({ $dim }) => ($dim ? 2 : 1)}px;
    font: 12px/16px ${UI_FONT};
    color: ${({ $dim }) => ($dim ? "#5a6472" : "#000")};
`;

const PanelClose = styled.button`
    flex: none;
    align-self: flex-start;
    width: 42px;
    height: 17px;
    display: grid;
    place-items: center;
    border: 1px solid #444;
    border-top: 0;
    border-radius: 0 0 4px 4px;
    background: ${({ $active }) =>
        $active ? "linear-gradient(#e0a090, #cd6a55 45%, #b02c14 50%, #c9543a)" : "rgba(255, 255, 255, 0.2)"};
`;

const PanelClient = styled.div`
    flex: 1;
    min-height: 0;
    display: flex;
    flex-direction: column;
    padding: 4px 2px 2px;
    background: #f0f0f0;
    border: 1px solid #444;
    box-shadow: inset 1px 1px #fff, 0 0 0 1px #c4c4c4;
`;

const ObjectSelect = styled.label`
    position: relative;
    display: flex;
    width: 285px;
    height: 22px;
    border: 1px solid #a9adb5;
    background: #fff;

    select {
        appearance: none;
        flex: 1;
        padding: 0 20px 1px 2px;
    }

    span {
        position: absolute;
        top: 1px;
        right: 1px;
        width: 17px;
        height: 18px;
        display: grid;
        place-items: center;
        background: #f0f0f0;
        border: 1px solid #696969;
        box-shadow: inset 0 0 0 1px #fff;
        pointer-events: none;
    }
`;

const Tabs = styled.div`
    flex: none;
    display: flex;
    align-items: flex-end;
    height: 25px;
`;

const Tab = styled.button`
    width: ${({ $active }) => ($active ? 61 : 57)}px;
    height: ${({ $active }) => ($active ? 21 : 18)}px;
    margin: ${({ $active }) => ($active ? "0 0 -1px -2px" : 0)};
    z-index: ${({ $active }) => ($active ? 1 : 0)};
    border: 1px solid #8c93a5;
    border-bottom: 0;
    background: ${({ $active }) => ($active ? "#fff" : "linear-gradient(#f4f4f4, #d4d4d4)")};
`;

const TabBody = styled.div`
    flex: 1;
    min-height: 0;
    display: flex;
    margin: 0 1px 0 -2px;
    padding: 1px 1px 0 6px;
    background: #fff;
    border: 1px solid #8c93a5;
`;

const PropertyRows = styled.div`
    flex: none;
    width: 402px;
`;

const PropertyRow = styled.div`
    display: flex;
    height: 14px;

    label {
        width: 190px;
        padding-left: 1px;
        overflow: hidden;
        white-space: nowrap;
    }

    input {
        width: 212px;
        min-width: 0;
        border: 1px solid #a9adb5;
        border-top: 0;
    }

    &:last-child input {
        border-bottom: 0;
    }
`;

const BuildColumn = styled.div`
    flex: 1;
    display: flex;
    align-items: flex-end;
`;

const BuildButton = styled.button`
    width: 18px;
    height: 13px;
    margin-bottom: 1px;
    display: flex;
    align-items: center;
    justify-content: center;
    gap: 1px;
    border: 1px solid #555;
    border-radius: 2px;
    background: #f0f0f0;

    i {
        width: 2px;
        height: 2px;
        background: #000;
    }
`;

const FieldList = styled.ul`
    flex: 1;
    margin: 0;
    padding: 4px 1px 3px 3px;
    list-style: none;
    overflow: hidden;
    white-space: nowrap;
    line-height: 15px;
    background: #fff;
    border: 1px solid #333;
    box-shadow: 0 0 0 1px #c8d0da;
`;

const leader = (count) => " .".repeat(count);

const propertyList = [
    ["Имя", "Поле17", 26],
    ["Данные", "=[Количество подключений]/[ст]", 23],
    ["Формат поля", "Процентный", 18],
    ["Число десятичных знаков", "Авто", 7],
    ["Маска ввода", "", 19],
];

const PropertySheet = () => {
    const [tab, setTab] = useState("Все");

    return (
        <PropertyPanel $x={196} $y={270} $w={466} $h={160}>
            <PanelTitle>
                <Icon name="properties" />
                <Caption>Поле: Поле17</Caption>
                <PanelClose $active aria-label="close">
                    <Glyph kind="close" stroke="#54241c" />
                </PanelClose>
            </PanelTitle>
            <PanelClient>
                <ObjectSelect>
                    <select aria-label="Объект" defaultValue="Поле17">
                        <option>Поле17</option>
                    </select>
                    <span>
                        <Arrow size={7} />
                    </span>
                </ObjectSelect>
                <Tabs role="tablist">
                    {["Макет", "Данные", "События", "Другие", "Все"].map((name) => (
                        <Tab
                            key={name}
                            role="tab"
                            aria-selected={tab === name}
                            $active={tab === name}
                            onClick={() => setTab(name)}
                        >
                            {name}
                        </Tab>
                    ))}
                </Tabs>
                <TabBody>
                    <PropertyRows>
                        {propertyList.map(([name, value, count], i) => (
                            <PropertyRow key={name}>
                                <label htmlFor={`prop-${i}`}>
                                    {name}
                                    {leader(count)}
                                </label>
                                <input id={`prop-${i}`} defaultValue={value} />
                            </PropertyRow>
                        ))}
                    </PropertyRows>
                    <BuildColumn>
                        <BuildButton aria-label="build">
                            <i />
                            <i />
                            <i />
                        </BuildButton>
                    </BuildColumn>
                    <ScrollBar vertical size={16} grip={false} />
                </TabBody>
            </PanelClient>
        </PropertyPanel>
    );
};

const FieldListPanel = () => (
    <FieldPanel $x={1306} $y={585} $w={132} $h={100}>
        <PanelTitle $dim>
            <Icon name="fieldList" />
            <Caption>Популяр...</Caption>
            <PanelClose aria-label="close">
                <Glyph kind="close" />
            </PanelClose>
        </PanelTitle>
        <FieldList>
            <li>ТарифНаим</li>
            <li>ТарифЦена</li>
            <li>Количество подключений</li>
        </FieldList>
    </FieldPanel>
);

/* ---------- status bar and task bar ---------- */

const StatusBar = styled.footer`
    flex: none;
    height: 21px;
    display: flex;
    gap: 3px;
    padding: 3px 8px 1px 9px;
    background: #f0f0f0;
    font: 11px/16px "Open Sans", "Noto Sans", sans-serif;
`;

const StatusText = styled.div`
    flex: 1;
    margin-right: 16px;
    padding-left: 1px;
    border: 1px solid #d7d7d7;
`;

const StatusCell = styled.div`
    width: ${({ $w }) => $w}px;
    border: 1px solid #d7d7d7;
`;

const TaskBar = styled.footer`
    flex: none;
    height: 30px;
    display: flex;
    align-items: center;
    padding-right: 11px;
    background: linear-gradient(#333 1px, #8a8a8a 1px, #5c5c5c 6px, #3a3a3a 14px, #060606 15px, #000);
    color: #fff;
`;

const StartButton = styled.button`
    flex: none;
    align-self: flex-end;
    height: 34px;
    width: 42px;
    margin: 0 13px 0 9px;
`;

const TaskGrip = styled.span`
    flex: none;
    width: 8px;
    height: 21px;
    background: radial-gradient(circle, #888 1px, transparent 1px) 0 0 / 3px 3px;
`;

const QuickLaunch = styled.div`
    flex: none;
    display: flex;
    gap: 7px;
    padding: 0 13px 0 9px;
`;

const Tasks = styled.div`
    flex: 1;
    min-width: 0;
    display: flex;
    gap: 4px;
    padding: 0 11px 0 8px;
`;

const Task = styled.button`
    flex: 1 1 0;
    min-width: 0;
    height: 27px;
    display: flex;
    align-items: center;
    gap: 5px;
    padding: 0 6px 0 7px;
    border: 1px solid #5e5e5e;
    border-radius: 3px;
    box-shadow: inset 0 0 0 1px #1c1c1c;
    background: ${({ $active }) =>
        $active
            ? "linear-gradient(#2c2c2c, #141414 48%, #000)"
            : "linear-gradient(#808080, #484848 48%, #0c0c0c 52%, #1c1c1c)"};

    span {
        white-space: nowrap;
    }
`;

const Tray = styled.div`
    flex: none;
    display: flex;
    align-items: center;
    gap: 2px;
`;

const Language = styled.span`
    width: 49px;
    padding-left: 8px;
`;

const Counter = styled.span`
    width: 16px;
    height: 15px;
    background: #000;
    color: #ff0;
    font: 10px/15px ${TAHOMA};
    text-align: center;
`;

const TrayGap = styled.span`
    width: 8px;
`;

const Clock = styled.time`
    padding-left: 5px;
`;

const StartOrb = () => (
    <svg width="42" height="34" viewBox="0 0 42 34" aria-hidden="true">
        <defs>
            <radialGradient id="orb" cx="50%" cy="85%" r="75%">
                <stop offset="0" stopColor="#3cc4f0" />
                <stop offset=".5" stopColor="#1c5c94" />
                <stop offset="1" stopColor="#16283c" />
            </radialGradient>
            <linearGradient id="shine" x1="0" y1="0" x2="0" y2="1">
                <stop offset="0" stopColor="#dce8f2" stopOpacity=".9" />
                <stop offset="1" stopColor="#8aa6c0" stopOpacity=".3" />
            </linearGradient>
        </defs>
        <circle cx="21" cy="20" r="19.500" fill="url(#orb)" stroke="#0c1824" />
        <path d="M3 18a18 17 0 0 1 36 0q-18 6-36 0z" fill="url(#shine)" />
        <path d="M12 8q4-3 8 0l-2 9q-4-2-8 0z" fill="#ee5a2c" />
        <path d="M22 9q5 3 11 0l-3 9q-5 2-10-1z" fill="#86c43c" />
        <path d="M9 19q5-2 9 0l-2 8q-5-3-9 0z" fill="#4ca8ec" />
        <path d="M20 19q5 3 10 1l-2 8q-5 2-10-1z" fill="#fcc834" />
    </svg>
);

/* ---------- toolbars ---------- */

// "|" is a separator, "v" a drop-down arrow, "*" marks a pressed button
const formatTools = "alignLeft alignCenter alignRight | bucket v | fontColor v | pen v | *border v | *effect v";
const boxTools =
    "*pointer *wand | label textbox group toggle radio check combo listbox command image unbound bound pageBreak tab subform line rect more";
const designTools =
    "preview v | save search | print preview | cut copy paste brush | undo v~ redo v~ | globe | *fieldList *tools sorting | format | build | *properties wand | windows newObject v | help";

const ToolItems = ({ items }) =>
    items.split(" ").map((item, i) => {
        if (item === "|") return <Separator key={i} />;
        if (item[0] === "v") {
            return (
                <DropButton key={i} aria-label="more">
                    <Arrow color={item === "v~" ? "#7d8db0" : "#000"} />
                </DropButton>
            );
        }
        const name = item.replace("*", "");
        return (
            <ToolButton key={i} $on={item[0] === "*"} aria-label={name}>
                <Icon name={name} />
            </ToolButton>
        );
    });

const ToolbarTail = () => (
    <ToolbarEnd aria-label="toolbar options">
        <svg width="7" height="8" viewBox="0 0 7 8">
            <path d="M1 1.500h6" stroke="#fff" />
            <path d="M0 4h7L3.500 8z" fill="#fff" />
        </svg>
    </ToolbarEnd>
);

const menu = [
    ["", "Ф", "айл"],
    ["", "П", "равка"],
    ["", "В", "ид"],
    ["Вст", "а", "вка"],
    ["Фор", "м", "ат"],
    ["С", "е", "рвис"],
    ["", "О", "кно"],
    ["", "С", "правка"],
];

const tasks = [
    ["totalcmd", "Tota..."],
    ["opera", "фун..."],
    ["word", "6233..."],
    ["windows", "6233..."],
    ["word", "6011..."],
    ["word", "6166..."],
    ["msaccess", "Micr..."],
    ["word", "5237..."],
    ["word", "5551..."],
    ["form", "Глав..."],
    ["report", "Поп..."],
];

const App = () => (
    <Shell>
        <GlobalStyle />
        <TitleBar>
            <AppTitle>
                <Icon name="key" />
                Microsoft Access
            </AppTitle>
            <FrameButtons>
                {["min", "restore", "close"].map((kind) => (
                    <FrameButton key={kind} $first={kind === "min"} $wide={kind === "close"} aria-label={kind}>
                        <Glyph kind={kind} />
                    </FrameButton>
                ))}
            </FrameButtons>
        </TitleBar>
        <CommandArea>
            <MenuRow>
                <Grip />
                {menu.map(([before, key, after]) => (
                    <MenuItem key={before + key + after}>
                        {before}
                        <u>{key}</u>
                        {after}
                    </MenuItem>
                ))}
                <Spacer />
                <Question>
                    <input aria-label="Вопрос" placeholder="Введите вопрос" />
                    <button aria-label="history">
                        <Arrow />
                    </button>
                </Question>
            </MenuRow>
            <ToolbarRow $indent={4}>
                <Toolbar>
                    <Grip />
                    <ComboBox label="Объект" value="Поле17" width={112} />
                    <Separator />
                    <ComboBox label="Шрифт" value="Arial Cyr" width={162} />
                    <Separator />
                    <ComboBox label="Размер" value="9" width={61} />
                    <Separator />
                    <ToolButton>
                        <Letter>Ж</Letter>
                    </ToolButton>
                    <ToolButton>
                        <Letter $italic>К</Letter>
                    </ToolButton>
                    <ToolButton>
                        <Letter $underline>Ч</Letter>
                    </ToolButton>
                    <Separator />
                    <ToolItems items={formatTools} />
                    <ToolbarTail />
                </Toolbar>
                <Toolbar>
                    <Grip />
                    <ToolItems items={boxTools} />
                    <ToolbarTail />
                </Toolbar>
            </ToolbarRow>
            <ToolbarRow $indent={3}>
                <Toolbar>
                    <Grip />
                    <ToolItems items={designTools} />
                    <ToolbarTail />
                </Toolbar>
            </ToolbarRow>
        </CommandArea>
        <Workspace>
            <ChildWindow $x={698} $y={46} $w={442} $h={333}>
                <ChildTitle>
                    <Spacer />
                    <WindowButtons />
                </ChildTitle>
                <FormClient $color="#86bab1">
                    <ExitButton>Выход</ExitButton>
                </FormClient>
            </ChildWindow>
            <ReportWindow />
            <PropertySheet />
            <FieldListPanel />
        </Workspace>
        <StatusBar>
            <StatusText>Маска для ввода любых данных в поле</StatusText>
            {[35, 27, 27, 33, 36, 32, 31, 34].map((w, i) => (
                <StatusCell key={i} $w={w} />
            ))}
        </StatusBar>
        <TaskBar>
            <StartButton aria-label="Пуск">
                <StartOrb />
            </StartButton>
            <TaskGrip />
            <QuickLaunch>
                {["outlook", "firefox", "opera", "floppy", "ie", "switcher", "desktop"].map((name) => (
                    <Icon key={name} name={name} />
                ))}
            </QuickLaunch>
            <TaskGrip />
            <Tasks>
                {tasks.map(([icon, text], i) => (
                    <Task key={i} $active={icon === "report"}>
                        <Icon name={icon} />
                        <span>{text}</span>
                    </Task>
                ))}
            </Tasks>
            <Tray>
                <TaskGrip />
                <Language>RU</Language>
                <Icon name="cpuLoad" />
                <Icon name="diskLoad" />
                <Counter>59</Counter>
                <Icon name="teamviewer" size={15} />
                <Icon name="keys" />
                <Icon name="frog" />
                <Icon name="alert" />
                <Icon name="usb" />
                <TrayGap />
                <Icon name="power" />
                <Icon name="network" />
                <Icon name="volume" />
                <Clock>22:48</Clock>
            </Tray>
        </TaskBar>
    </Shell>
);

export default App;
